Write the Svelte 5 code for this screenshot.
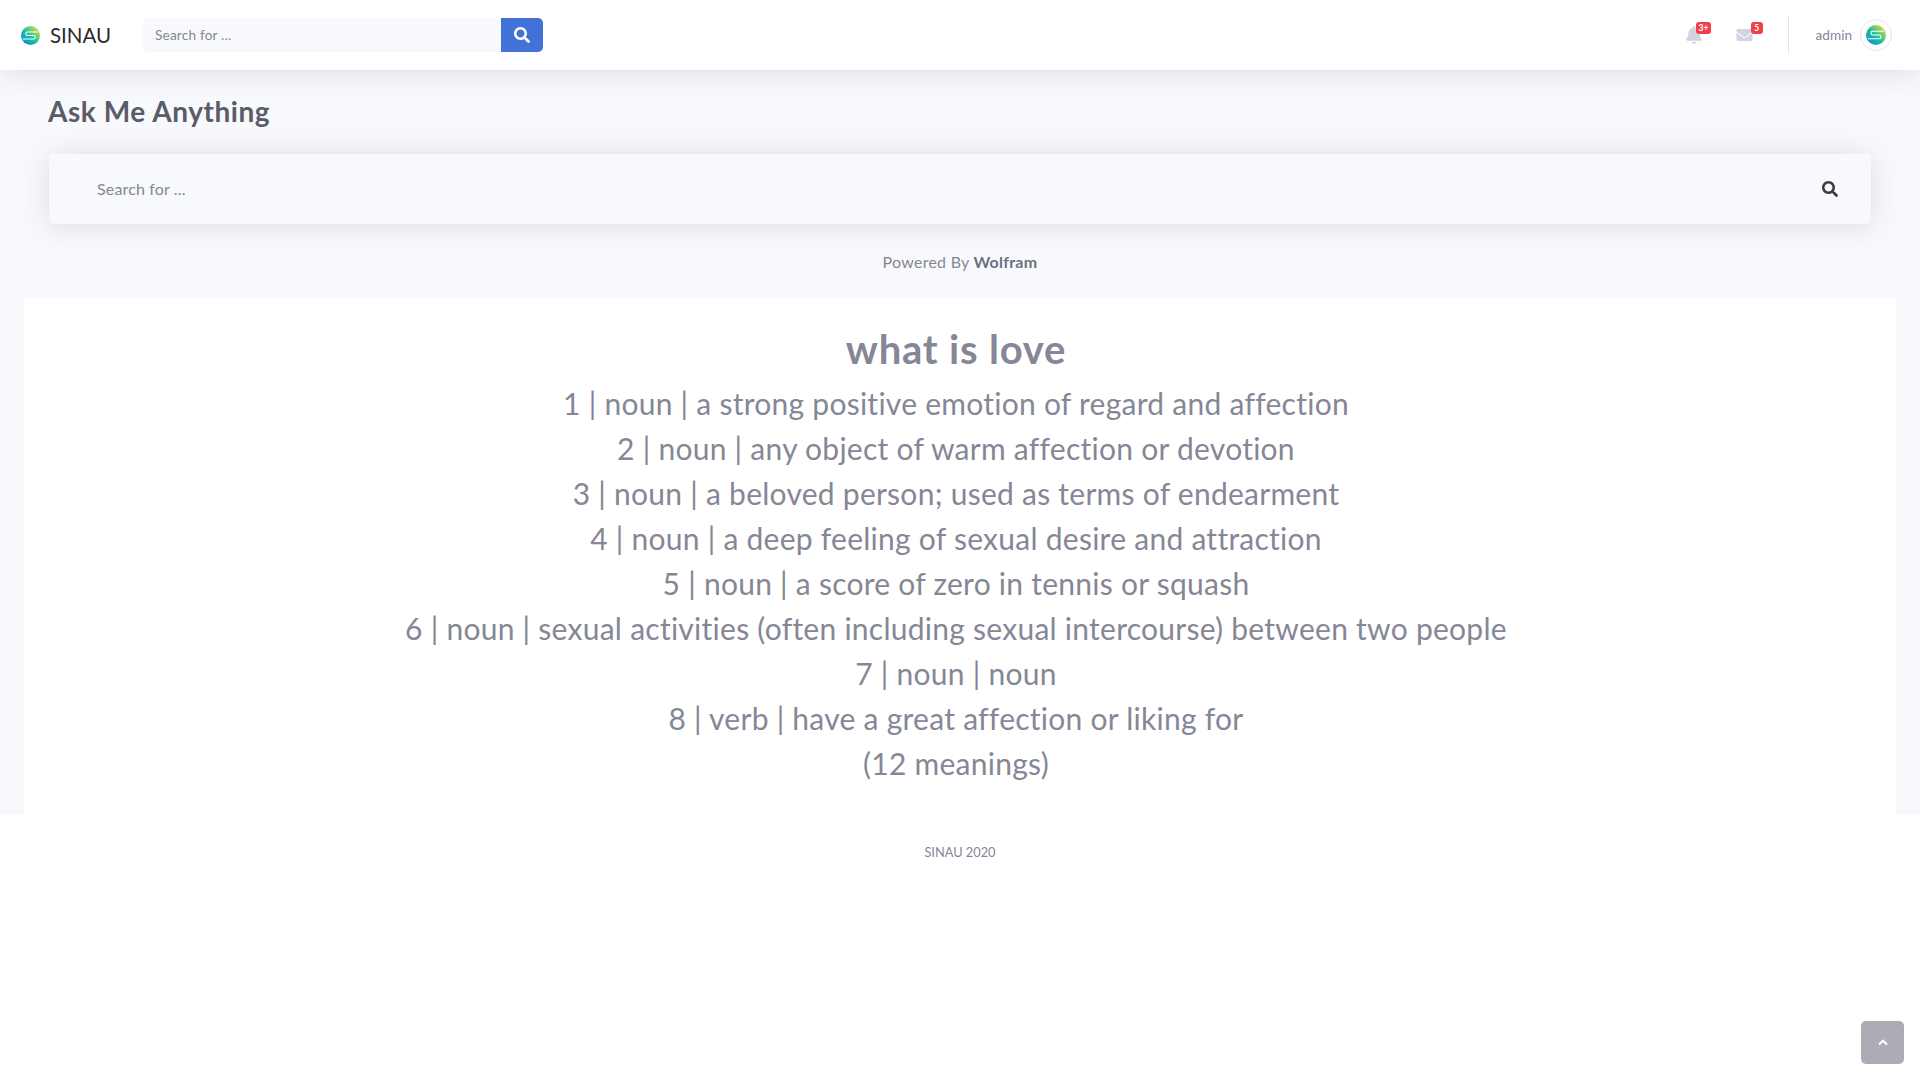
<script lang="ts">
  const meanings = [
    '1 | noun | a strong positive emotion of regard and affection',
    '2 | noun | any object of warm affection or devotion',
    '3 | noun | a beloved person; used as terms of endearment',
    '4 | noun | a deep feeling of sexual desire and attraction',
    '5 | noun | a score of zero in tennis or squash',
    '6 | noun | sexual activities (often including sexual intercourse) between two people',
    '7 | noun | noun',
    '8 | verb | have a great affection or liking for',
    '(12 meanings)'
  ];
</script>

{#snippet logo(size: number)}
  <svg width={size} height={size} viewBox="0 0 32 32">
    <defs>
      <linearGradient id="sg-{size}" x1="0.1" y1="0.9" x2="0.9" y2="0.1">
        <stop offset="0" stop-color="#0f8fd0" />
        <stop offset="0.45" stop-color="#17bfa6" />
        <stop offset="1" stop-color="#dbe03a" />
      </linearGradient>
    </defs>
    <circle cx="16" cy="16" r="16" fill="url(#sg-{size})" />
    <path d="M29 10H11a3 3 0 0 0 0 6h10a3 3 0 0 1 0 6H3" fill="none" stroke="#fff" stroke-width="1.800" />
  </svg>
{/snippet}

{#snippet searchIcon(size: number, color: string)}
  <svg width={size} height={size} viewBox="0 0 512 512" fill={color}>
    <path d="M505 442.700L405.300 343c-4.500-4.500-10.600-7-17-7H372c27.600-35.300 44-79.700 44-128C416 93.100 322.900 0 208 0S0 93.100 0 208s93.100 208 208 208c48.300 0 92.700-16.400 128-44v16.300c0 6.400 2.500 12.500 7 17l99.700 99.700c9.400 9.400 24.600 9.400 33.900 0l28.300-28.300c9.400-9.400 9.400-24.600.1-34zM208 336c-70.700 0-128-57.200-128-128 0-70.700 57.200-128 128-128 70.700 0 128 57.200 128 128 0 70.700-57.200 128-128 128z" />
  </svg>
{/snippet}

<div class="page">
  <nav class="topbar">
    <a class="brand" href="#top">
      {@render logo(19)}
      <span>SINAU</span>
    </a>
    <form class="nav-search">
      <input type="text" placeholder="Search for ..." />
      <button type="button">{@render searchIcon(16, '#fff')}</button>
    </form>
    <div class="nav-right">
      <div class="nav-icon bell">
        <svg width="16" height="18" viewBox="0 0 448 512" fill="#d1d3e2">
          <path d="M224 512c35.300 0 64-28.700 64-64H160c0 35.300 28.700 64 64 64zm215.400-149.700c-19.300-20.800-55.500-52-55.500-154.300 0-77.700-54.500-139.900-127.900-155.200V32c0-17.700-14.300-32-32-32s-32 14.300-32 32v20.800C118.600 68.100 64.100 130.300 64.100 208c0 102.300-36.200 133.500-55.500 154.300-6 6.400-8.700 14.100-8.600 21.700.1 16.400 13 32 32.100 32h383.800c19.100 0 32-15.600 32.100-32 .1-7.600-2.600-15.300-8.600-21.700z" />
        </svg>
        <span class="badge">3+</span>
      </div>
      <div class="nav-icon mail">
        <svg width="17" height="16" viewBox="0 0 512 512" fill="#d1d3e2">
          <path d="M502.300 190.800c3.900-3.100 9.700-.2 9.700 4.700V400c0 26.500-21.500 48-48 48H48c-26.500 0-48-21.500-48-48V195.600c0-5 5.700-7.800 9.700-4.700 22.400 17.400 52.100 39.500 154.100 113.600 21.100 15.400 56.700 47.800 92.200 47.600 35.700.3 72-32.800 92.300-47.600 102-74.100 131.600-96.300 154-113.700zM256 320c23.200.4 56.600-29.200 73.400-41.400 132.700-96.300 142.800-104.700 173.400-128.700 5.800-4.500 9.200-11.500 9.200-18.900v-19c0-26.500-21.500-48-48-48H48C21.500 64 0 85.500 0 112v19c0 7.400 3.400 14.300 9.200 18.900 30.600 23.900 40.700 32.400 173.400 128.700 16.800 12.200 50.200 41.800 73.400 41.400z" />
        </svg>
        <span class="badge">5</span>
      </div>
      <div class="divider"></div>
      <span class="user">admin</span>
      <div class="avatar">{@render logo(20)}</div>
    </div>
  </nav>

  <main class="content">
    <h1 class="heading">Ask Me Anything</h1>
    <div class="ask-card">
      <input type="text" placeholder="Search for ..." />
      {@render searchIcon(16, '#3a3b45')}
    </div>
    <p class="powered">Powered By <b>Wolfram</b></p>
    <section class="answer">
      <h2>what is love</h2>
      {#each meanings as line}
        <div class="line">{line}</div>
      {/each}
    </section>
  </main>

  <footer>SINAU 2020</footer>
  <a class="to-top" href="#top" aria-label="Back to top">
    <svg width="10" height="7" viewBox="0 0 10 7"><path d="M1 5.500 5 1.800 9 5.500" fill="none" stroke="#fff" stroke-width="2.200" /></svg>
  </a>
</div>

<style>
  :global(body) {
    background: #fff;
    font-family: Lato, "Noto Sans", sans-serif;
    color: #858796;
  }
  .page { min-height: 1080px; overflow: hidden; position: relative; }
  input {
    font: inherit; border: 0; outline: 0; background: transparent; color: #6e707e;
  }
  input::placeholder { color: #858796; opacity: 1; }

  .topbar {
    height: 70px; background: #fff; display: flex; align-items: center;
    padding: 0 16px 0 21px; position: relative; z-index: 1;
    box-shadow: 0 2px 28px rgba(58, 59, 69, 0.15);
  }
  .brand {
    display: flex; align-items: center; gap: 10px; width: 122px;
    color: #2b2b2b; text-decoration: none; font-size: 20.500px;
  }
  .nav-search { display: flex; width: 400px; height: 34px; }
  .nav-search input {
    flex: 1; min-width: 0; background: #f8f9fc; padding: 0 12px; font-size: 13.600px;
    letter-spacing: 0.2px; border-radius: 5px 0 0 5px;
  }
  .nav-search button {
    width: 42px; border: 0; background: #4272d7; border-radius: 0 5px 5px 0;
    display: flex; align-items: center; justify-content: center; padding: 0;
  }
  .nav-right { margin-left: auto; display: flex; align-items: center; height: 70px; }
  .nav-icon { position: relative; display: flex; }
  .bell { margin-right: 34px; }
  .mail { margin-right: 35px; }
  .badge {
    position: absolute; top: -4px; left: 10px; background: #ef4048; color: #fff;
    font-size: 8.500px; font-weight: 700; line-height: 12px; height: 12px;
    padding: 0 3px; border-radius: 3px; min-width: 6px; text-align: center;
  }
  .mail .badge { left: 15px; top: -5px; }
  .divider { width: 1px; height: 38px; background: #e3e6f0; margin-right: 27px; }
  .user { font-size: 13.600px; margin-right: 8px; }
  .avatar {
    width: 32px; height: 32px; border: 1px solid #e3e6f0; border-radius: 50%;
    box-sizing: border-box; display: flex; align-items: center; justify-content: center;
    margin-right: 12px;
  }

  .content { background: #f8f9fc; padding: 24px 24px 0; height: 745px; box-sizing: border-box; }
  .heading {
    margin: 1px 24px 25px; font-size: 28px; line-height: 1.2; font-weight: 700; color: #5a5c69;
    letter-spacing: 0.55px;
  }
  .ask-card {
    margin: 0 25px; height: 70px; background: #f8f9fc; border-radius: 5px;
    display: flex; align-items: center; padding: 0 33px 0 48px; box-sizing: border-box;
    box-shadow: 0 2px 28px rgba(58, 59, 69, 0.15);
  }
  .ask-card input { flex: 1; font-size: 16px; padding: 0; letter-spacing: 0.15px; }
  .powered { text-align: center; margin: 26px 0 0; font-size: 16px; line-height: 24px; height: 48px; letter-spacing: 0.25px; }
  .powered b { font-weight: 700; color: #6e707e; }
  .answer { background: #fff; height: 517px; padding-top: 27px; text-align: center; box-sizing: border-box; padding-right: 8px; }
  .answer h2 { margin: 0 0 8px; font-size: 40px; line-height: 48px; font-weight: 700; color: #858796; letter-spacing: 0.8px; }
  .line { font-size: 30px; line-height: 45px; letter-spacing: 0.26px; }

  footer { text-align: center; font-size: 12.800px; line-height: 16px; margin-top: 29px; }
  .to-top {
    position: fixed; right: 16px; bottom: 16px; width: 43px; height: 43px; border-radius: 5px;
    background: rgba(90, 92, 105, 0.5); display: flex; align-items: center; justify-content: center;
  }
</style>
